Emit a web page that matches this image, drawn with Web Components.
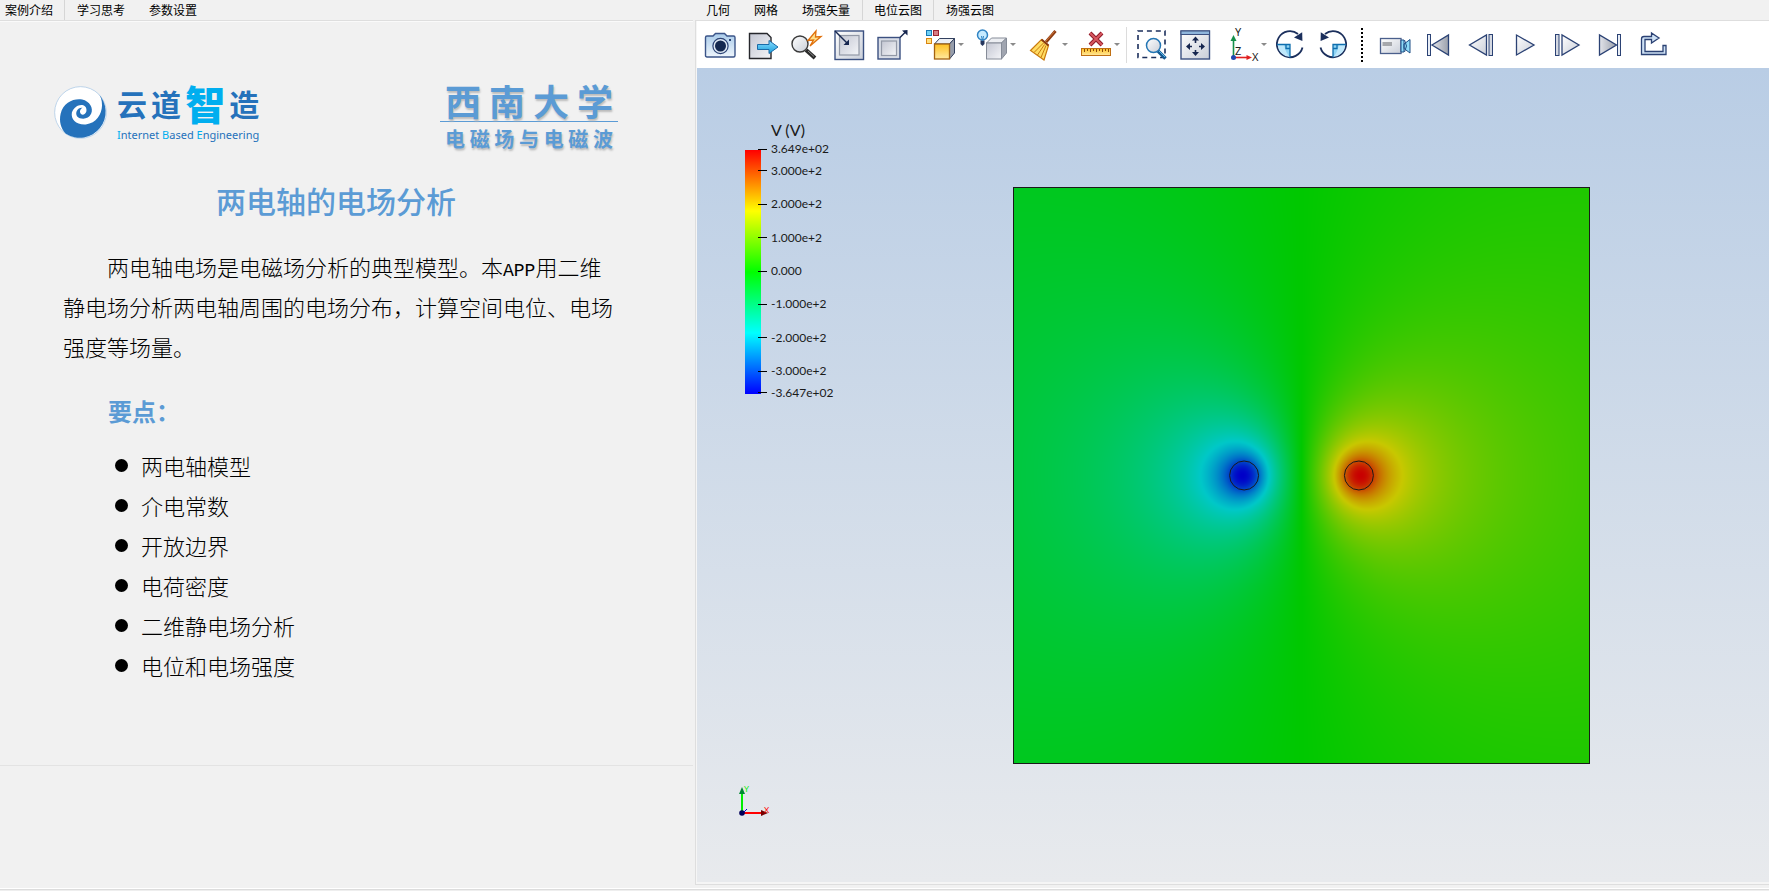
<!DOCTYPE html>
<html lang="zh-CN">
<head>
<meta charset="utf-8">
<title>两电轴的电场分析</title>
<style>
html,body{margin:0;height:100%}
body{background:#f1f1f1;color:#000;font-family:"Liberation Sans","Noto Sans CJK SC",sans-serif;font-size:12px}
</style>
</head>
<body>
<sim-app></sim-app>

<script>
const define = (name, html, setup) => {
  const tpl = document.createElement('template');
  tpl.innerHTML = html;
  customElements.define(name, class extends HTMLElement {
    connectedCallback() {
      if (this.shadowRoot) return;
      this.attachShadow({mode: 'open'}).appendChild(tpl.content.cloneNode(true));
      if (setup) setup(this, this.shadowRoot);
    }
  });
};

/* ---------- tabs ---------- */
define('tab-button', `
<style>
:host{display:block;height:20px}
button{all:unset;box-sizing:border-box;display:block;height:20px;padding:0 12px;font:12px/18px "Noto Sans CJK SC",sans-serif;white-space:nowrap}
:host([first]) button{padding-left:5px}
:host([selected]) button{padding:0 11px;border:solid #d6d6d6;border-width:0 1px}
:host([first][selected]) button{padding-left:5px;border-left:0}
</style>
<button type="button"><slot></slot></button>`);

/* ---------- toolbar icons, 32 x 32 ---------- */
const defs = `<defs>
<linearGradient id="g" x2="1" y2="1"><stop stop-color="#c3c6d2"/><stop offset="1" stop-color="#f4f5f8"/></linearGradient>
<linearGradient id="b" x2="0" y2="1"><stop stop-color="#a9cbea"/><stop offset="1" stop-color="#eef5fc"/></linearGradient>
<linearGradient id="c" x2="0" y2="1"><stop stop-color="#8adcff"/><stop offset="1" stop-color="#189fdc"/></linearGradient>
<linearGradient id="o" x2="0" y2="1"><stop stop-color="#ffc020"/><stop offset="1" stop-color="#ffe9a0"/></linearGradient>
<linearGradient id="w" x2="1" y2="1"><stop stop-color="#fff"/><stop offset="1" stop-color="#c9ced8"/></linearGradient>
<linearGradient id="d" x2="1" y2="0"><stop stop-color="#e2e4ea"/><stop offset="1" stop-color="#9ba0ab"/></linearGradient>
</defs>`;
const rotate = `<path d="M28.5 18.5A13 13 0 1 1 24 5" fill="none" stroke="#1b2f5c" stroke-width="1.8"/>
<path d="M20 8.5L28.2 3.2L28.4 12z" fill="#1b2f5c"/>
<path d="M3.5 15.5H16V28Q5 27 3.500 15.500z" fill="#bfe8fb"/><path d="M10 15.500H16V28q-4-3-6-12.500z" fill="#8fd4f4"/>
<path d="M3 15.500H16V28.500M12 15.500V19.500H16" fill="none" stroke="#0e6eae" stroke-width="1.3"/>`;
const icons = {
camera: `<path d="M3 7H9L11.500 4.500H20.500L23 7H29.500Q31 7 31 8.500V26.500Q31 28 29.500 28H3Q1.500 28 1.500 26.500V8.500Q1.500 7 3 7z" fill="url(#b)" stroke="#3b5488" stroke-width="1.4"/><circle cx="16.500" cy="17" r="7.600" fill="#dfe9f4" stroke="#2b4274" stroke-width="1.200"/><circle cx="16.500" cy="17" r="5.500" fill="#14284f"/><rect x="25" y="10" width="2" height="2" fill="#2b4274"/>`,
export: `<path d="M2.500 4.500H20L24 8.500V29.500H2.500z" fill="url(#g)" stroke="#26272c" stroke-width="1.400"/><path d="M10.500 15.500H22V11.500L31 18L22 24.500V20.500H10.500z" fill="url(#c)" stroke="#1a6ba8"/>`,
probe: `<path d="M16 21L25 29" stroke="#2b2b2b" stroke-width="4"/><path d="M18 22L24 27.500" stroke="#8a8a8a"/><circle cx="10" cy="15" r="8" fill="url(#w)" stroke="#3a3a3a" stroke-width="1.400"/><path d="M26 2L18 11.500L23.500 11L20 17L31 7.500L25.500 8z" fill="#ffe08a" stroke="#e0700c" stroke-width="1.300"/>`,
shrink: `<rect x="2" y="2" width="28.500" height="28.500" fill="url(#w)" stroke="#3b5080" stroke-width="1.400"/><rect x="6.500" y="6.500" width="19.500" height="19.500" fill="url(#g)" stroke="#9298a6" stroke-width="1.200"/><path d="M2 2L14 14" stroke="#16264f" stroke-width="1.400"/><path d="M16 16V10.500L10.500 16z" fill="#16264f"/>`,
expand: `<rect x="2" y="8.500" width="22" height="21.500" fill="#d9dde6" stroke="#3b5080" stroke-width="1.400"/><rect x="5.500" y="12" width="15" height="14.500" fill="url(#g)" stroke="#9298a6" stroke-width="1.200"/><path d="M24 8.500L30 2.500" stroke="#16264f" stroke-width="1.400"/><path d="M31.500 1V6.500L26 1.500z" fill="#16264f"/>`,
cube: `<rect x="2.500" y="1.500" width="5" height="5" fill="#6fd0f6" stroke="#1779b5"/><rect x="9.500" y="1.500" width="5" height="5" fill="#d67b83" stroke="#9c2433"/><rect x="2.500" y="9.500" width="5" height="5" fill="#ffe080" stroke="#d98411"/><path d="M10.500 15L15.500 9.500H30.500L25.500 15z" fill="#eceef2" stroke="#33415f"/><path d="M25.500 15L30.500 9.500V24L25.500 30z" fill="#969dab" stroke="#33415f"/><rect x="10.500" y="15" width="15" height="15" fill="url(#o)" stroke="#a36210" stroke-width="1.300"/>`,
bulb: `<circle cx="6.500" cy="6" r="5" fill="#c6ebff" stroke="#3184c4" stroke-width="1.500"/><path d="M4.500 11.500H8.500V15L6.500 17L4.500 15z" fill="#26375e"/><path d="M5.500 7L6.500 12L7.500 7" fill="none" stroke="#3184c4"/><path d="M10.500 14L15.500 9H30.500L25.500 14z" fill="#eceef2" stroke="#868c98"/><path d="M25.500 14L30.500 9V24L25.500 30z" fill="#a0a5b0" stroke="#868c98"/><rect x="10.500" y="14" width="15" height="16" fill="url(#g)" stroke="#868c98"/>`,
broom: `<path d="M27.500 2L18 13" stroke="#8c3b10" stroke-width="3"/><path d="M26.500 2.500L18 12" stroke="#d1763a"/><path d="M13.500 10.500L20.500 16.500L16 31L2.500 21.500z" fill="#ffdc62" stroke="#c97a0e" stroke-width="1.200"/><path d="M15.500 14L6 23.500M16.500 15.500L9.500 26M18 16.500L13 28.500" stroke="#c97a0e"/><path d="M13.500 10.500L20.500 16.500" stroke="#8c3b10" stroke-width="2"/>`,
clear: `<path d="M10 4L22 16M22 4L10 16" stroke="#8f1a28" stroke-width="4"/><path d="M10 4L22 16M22 4L10 16" stroke="#d85860" stroke-width="2"/><rect x="1.500" y="19.500" width="29" height="7" fill="url(#o)" stroke="#c07014"/><path d="M4.500 20V23M7.500 20V22M10.500 20V23M13.500 20V22M16.500 20V23M19.500 20V22M22.500 20V23M25.500 20V22M28.500 20V23" stroke="#8a4a0c"/>`,
select: `<rect x="2" y="2" width="27" height="26.500" fill="none" stroke="#1b2f5c" stroke-width="1.600" stroke-dasharray="5 3.900"/><path d="M22 22L29.500 29.500" stroke="#155a92" stroke-width="3.600"/><path d="M23 22L29 28" stroke="#5bb6ea"/><circle cx="17.500" cy="16.500" r="7" fill="url(#w)" stroke="#2476b4" stroke-width="1.500"/>`,
fit: `<rect x="2" y="2" width="28.500" height="28" fill="url(#w)" stroke="#3b5080" stroke-width="1.400"/><rect x="2" y="2" width="28.500" height="3.500" fill="#8fb6dc" stroke="#3b5080"/><path d="M16.500 10V14M16.500 21V25M9 17.500H13M20 17.500H24" stroke="#16264f" stroke-width="1.600"/><path d="M16.500 7.500l3.500 4h-7zM16.500 27l3.500-4h-7zM7 17.500l4-3.500v7zM26 17.500l-4-3.500v7z" fill="#16264f"/>`,
axes: `<path d="M6.500 28V10" stroke="#16904a" stroke-width="1.600"/><path d="M6.500 6L9.500 12H3.500z" fill="#16904a"/><path d="M7 28.500H20" stroke="#e02020" stroke-width="1.600"/><path d="M25 28.500L19.500 31V26z" fill="#e02020"/><circle cx="6.500" cy="28.500" r="2.500" fill="#2048b0"/><g font-family="Noto Sans" font-size="11" fill="#222"><text x="8" y="7">Y</text><text x="8" y="26">Z</text><text x="25" y="32">X</text></g>`,
cw: rotate,
ccw: `<g transform="matrix(-1 0 0 1 32 0)">${rotate}</g>`,
video: `<rect x="1.500" y="9.500" width="20.500" height="15" fill="url(#w)" stroke="#4a5f8c" stroke-width="1.300"/><rect x="3.500" y="13" width="9.500" height="4" fill="#a6a8ac"/><path d="M22 11H25V23H22zM25 15L31 10.500V24L25 19.500z" fill="#8fdcf8" stroke="#1f4f86"/><path d="M25.500 11L27.500 17L25.500 23" fill="none" stroke="#1f4f86"/>`,
first: `<path d="M26.500 6V26L10 16z" fill="url(#d)" stroke="#2b4274" stroke-width="1.300"/><rect x="5.500" y="5.500" width="3" height="21" fill="#e8edf5" stroke="#2b4274"/>`,
prev: `<path d="M21.500 6V26L4.500 16z" fill="url(#w)" stroke="#2b4274" stroke-width="1.300"/><rect x="24" y="5.500" width="3.500" height="21" fill="#d5d9e2" stroke="#2b4274"/>`,
play: `<path d="M8.500 6V26L26 16z" fill="url(#w)" stroke="#2b4274" stroke-width="1.300"/>`,
next: `<path d="M11 6V26L28 16z" fill="url(#w)" stroke="#2b4274" stroke-width="1.300"/><rect x="4.500" y="5.500" width="3.500" height="21" fill="#d5d9e2" stroke="#2b4274"/>`,
last: `<path d="M5.500 6V26L22.500 16z" fill="url(#d)" stroke="#2b4274" stroke-width="1.300"/><rect x="23.500" y="5.500" width="3" height="21" fill="#e8edf5" stroke="#2b4274"/>`,
loop: `<path d="M4.500 25.500V10Q4.500 7.500 7 7.500H14.500V4L22 9L14.500 14V10.500H8V22.500H26V16.500H29V25.500z" fill="#cfe2f5" stroke="#2b4274" stroke-width="1.300"/>`
};
define('tool-button', `
<style>
:host{display:block;flex:none}
:host([menu]){margin-left:5px}
button{all:unset;box-sizing:border-box;width:43px;height:47px;padding:0 5px 0 6px;display:flex;align-items:center}
:host([menu]) button{width:47px;padding-right:0}
svg{display:block;flex:none;width:32px;height:32px;overflow:visible}
i{display:none;border:3px solid transparent;border-top-color:#8a8a8a;border-bottom:0;margin-left:2px}
:host([menu]) i{display:block}
</style>
<button type="button"><svg viewBox="0 0 32 32" aria-hidden="true"></svg><i></i></button>`,
(el, root) => {
  root.querySelector('svg').innerHTML = defs + icons[el.getAttribute('icon')];
  root.querySelector('button').setAttribute('aria-label', el.getAttribute('icon'));
});

define('tool-bar', `
<style>
:host{display:flex;align-items:center;height:47px;padding-left:1px;background:#fff;overflow:hidden}
.line{flex:none;width:1px;height:36px;margin:0 3px 0 5px;background:#dcdcdc}
.dots{flex:none;width:2px;height:34px;margin:0 10px 0 7px;background:repeating-linear-gradient(#000 0 2px,#fff 2px 4px)}
</style>
<tool-button icon="camera"></tool-button><tool-button icon="export"></tool-button><tool-button icon="probe"></tool-button><tool-button icon="shrink"></tool-button><tool-button icon="expand"></tool-button>
<tool-button icon="cube" menu></tool-button><tool-button icon="bulb" menu></tool-button><tool-button icon="broom" menu></tool-button><tool-button icon="clear" menu></tool-button>
<span class="line"></span>
<tool-button icon="select"></tool-button><tool-button icon="fit"></tool-button><tool-button icon="axes" menu></tool-button><tool-button icon="cw"></tool-button><tool-button icon="ccw"></tool-button>
<span class="dots"></span>
<tool-button icon="video"></tool-button><tool-button icon="first"></tool-button><tool-button icon="prev"></tool-button><tool-button icon="play"></tool-button><tool-button icon="next"></tool-button><tool-button icon="last"></tool-button><tool-button icon="loop"></tool-button>`);

/* ---------- colour legend: rows are spaced in proportion to their values ---------- */
define('color-legend', `
<style>
:host{display:block;font-family:Lato,sans-serif;color:#1a1a1a}
h2{margin:0 0 10px 26px;font-size:16px;line-height:20px;font-weight:400}
.scale{display:flex;height:244px}
.bar{width:16px;background:linear-gradient(#f00,#ff0 25%,#0f0 50%,#0ff 75%,#00f)}
ul{list-style:none;margin:0 0 0 -3px;padding:0;display:flex;flex-direction:column;font-size:12px}
li{min-height:0;height:0}
span{display:flex;align-items:center;gap:4px;height:14px;margin-top:-8px;line-height:14px;white-space:nowrap}
span::before{content:"";width:9px;height:1px;background:#000}
</style>
<h2>V (V)</h2>
<div class="scale"><div class="bar"></div><ul></ul></div>`,
(el, root) => {
  const ticks = [[364.9,'3.649e+02'],[300,'3.000e+2'],[200,'2.000e+2'],[100,'1.000e+2'],[0,'0.000'],
    [-100,'-1.000e+2'],[-200,'-2.000e+2'],[-300,'-3.000e+2'],[-364.7,'-3.647e+02']];
  const ul = root.querySelector('ul');
  ticks.forEach(([v, label], i) => {
    const li = document.createElement('li');
    li.innerHTML = '<span>' + label + '</span>';
    li.style.flex = i < ticks.length - 1 ? (v - ticks[i + 1][0]) + ' 0 0' : '0 0 0';
    ul.appendChild(li);
  });
});

/* ---------- potential of two uniformly charged cylinders ---------- */
define('field-plot', `
<style>
:host{display:block;position:relative;box-sizing:border-box;height:100%;aspect-ratio:1;border:1px solid #1a1a1a}
canvas,svg{display:block;width:100%;height:100%}
svg{position:absolute;inset:0}
</style>
<canvas width="576" height="576"></canvas>
<svg viewBox="0 0 576 576" fill="none" stroke="#1a1a1a"><circle cx="230.500" cy="288" r="14.500"/><circle cx="345.500" cy="288" r="14.500"/></svg>`,
(el, root) => {
  const N = 576, R = 14.5, D = 57.5, K = 141.5;
  const ctx = root.querySelector('canvas').getContext('2d');
  const img = ctx.createImageData(N, N);
  const phi = r2 => r2 > R * R ? -Math.log(r2) / 2 : -Math.log(R) + (1 - r2 / (R * R)) / 2;
  const clamp = t => Math.max(0, Math.min(1, t));
  for (let j = 0, p = 0; j < N; j++) for (let i = 0; i < N; i++, p += 4) {
    const x = i + .5 - N / 2, y = j + .5 - N / 2;
    const v = K * (phi((x - D) ** 2 + y * y) - phi((x + D) ** 2 + y * y));
    const s = 4 * v / 729.6;
    img.data[p] = 200 * clamp(s);
    img.data[p + 1] = 200 * clamp(2 - Math.abs(s));
    img.data[p + 2] = 200 * clamp(-s);
    img.data[p + 3] = 255;
  }
  ctx.putImageData(img, 0, 0);
});

define('axis-triad', `
<style>:host{display:block}svg{display:block}</style>
<svg width="36" height="36" viewBox="0 0 36 36"><path d="M5 30V10" stroke="#0e0" stroke-width="2"/><path d="M5 4L8 11H2z" fill="#083"/><path d="M5 30H25" stroke="#f00" stroke-width="2"/><path d="M31 30L24 27V33z" fill="#700"/><circle cx="5" cy="30" r="2.800" fill="#00005a"/><path d="M7 29l3-3" stroke="#00c"/><text x="7" y="9" font-family="Lato" font-size="8" fill="#0e0">Y</text><text x="27" y="30" font-family="Lato" font-size="8" fill="#f00">X</text></svg>`);

define('scene-view', `
<style>
:host{display:grid;grid-template-columns:137px minmax(0,1fr);background:linear-gradient(#b9cde5,#e8eaed);overflow:hidden}
.side{display:flex;flex-direction:column;justify-content:space-between}
color-legend{margin:52px 0 0 48px}
axis-triad{margin:0 0 63px 40px}
.stage{display:flex;justify-content:center;box-sizing:border-box;height:100%;min-height:0;padding:119px 0 118px}
</style>
<div class="side"><color-legend></color-legend><axis-triad></axis-triad></div>
<div class="stage"><field-plot></field-plot></div>`);

define('result-pane', `
<style>
:host{display:flex;flex-direction:column;min-width:0;min-height:0}
nav{display:flex;height:20px}
.frame{flex:1;min-height:0;display:flex;flex-direction:column;margin:0 0 3px 1px;padding-bottom:2px;padding-left:1px;border:1px solid #dedede;border-right:0;background:#f5f5f5}
scene-view{flex:1;min-height:0}
</style>
<nav><tab-button>几何</tab-button><tab-button>网格</tab-button><tab-button>场强矢量</tab-button><tab-button selected>电位云图</tab-button><tab-button>场强云图</tab-button></nav>
<div class="frame"><tool-bar></tool-bar><scene-view></scene-view></div>`);

/* ---------- introduction ---------- */
define('company-logo', `
<style>
:host{display:flex;align-items:flex-end;color:#2572bb;font-family:"Noto Sans CJK SC",sans-serif}
svg{width:53px;height:55px;margin:0 10px 3px 0;overflow:visible}
.name{display:flex;justify-content:space-between;align-items:center;height:48px;font-size:30px;line-height:48px;font-weight:700}
.name b{font-size:40px;color:#00aeef}
.en{font:11px/16px "Noto Sans",sans-serif;white-space:nowrap}
.en b{font-weight:400;color:#00aeef}
</style>
<svg viewBox="160 264 160 164" aria-hidden="true"><circle cx="240" cy="346" r="78" fill="#fff" stroke="#9fc3e4" stroke-width="2"/><path d="M293 289A78 78 0 0 1 196 410C180 395 175 372 180 350C188 315 220 303 245 307C268 312 280 334 272 350C264 368 240 368 230 358C222 346 232 330 246 332C236 338 236 350 246 353C258 353 262 336 254 328C242 318 222 326 214 346C210 368 228 384 256 382C288 378 304 352 305 325C305 308 301 297 293 289z" fill="#2572bb"/></svg>
<div><div class="name"><span>云</span><span>道</span><b>智</b><span>造</span></div><div class="en"><b>I</b>nternet <b>B</b>ased <b>E</b>ngineering</div></div>`);

define('school-logo', `
<style>
:host{display:block;width:178px;box-sizing:border-box;color:#5b9bd5;font-family:"Noto Sans CJK SC",sans-serif;font-weight:700;text-shadow:1px 2px 2px #bbb}
div{padding:0 5px;text-align:justify;text-align-last:justify}
.top{font-size:36px;line-height:42px;border-bottom:1px solid #5b9bd5}
.sub{font-size:20px;line-height:34px}
</style>
<div class="top">西南大学</div><div class="sub">电磁场与电磁波</div>`);

define('case-article', `
<style>
:host{display:block;font-family:"Noto Sans CJK SC",sans-serif;font-size:22px;line-height:40px;font-weight:300}
article{padding:57px 75px 0 54px}
header{display:flex;justify-content:space-between;align-items:flex-start;height:70px}
h1,h2{margin:0;color:#5b9bd5;font-weight:500;line-height:40px}
h1{margin-top:31px;font-size:30px;text-align:center}
p{margin:26px 0 0;padding-left:9px;text-indent:2em}
p span{font:400 18px/20px "Liberation Mono",monospace}
h2{margin:25px 0 0 54px;font-size:24px;font-weight:700}
ul{list-style:none;margin:14px 0 0 61px;padding:0}
li{display:flex;align-items:center;gap:13px}
li::before{content:"";width:13px;height:13px;border-radius:50%;background:#000}
</style>
<article>
<header><company-logo></company-logo><school-logo></school-logo></header>
<h1>两电轴的电场分析</h1>
<p>两电轴电场是电磁场分析的典型模型。本<span>APP</span>用二维静电场分析两电轴周围的电场分布，计算空间电位、电场强度等场量。</p>
<h2>要点：</h2>
<ul><li>两电轴模型</li><li>介电常数</li><li>开放边界</li><li>电荷密度</li><li>二维静电场分析</li><li>电位和电场强度</li></ul>
</article>`);

define('intro-pane', `
<style>
:host{display:flex;flex-direction:column;min-width:0;min-height:0;padding-right:1px}
nav{display:flex;height:20px;border-bottom:1px solid #dedede}
case-article{flex:744 0 0;min-height:0;overflow:hidden;border-top:1px solid #fafafa}
footer{flex:122 0 0;border-top:1px solid #e3e3e3}
</style>
<nav><tab-button first selected>案例介绍</tab-button><tab-button>学习思考</tab-button><tab-button>参数设置</tab-button></nav>
<case-article></case-article><footer></footer>`);

define('sim-app', `
<style>
:host{display:grid;grid-template:minmax(0,1fr) 1px / minmax(0,694fr) minmax(0,1075fr);box-sizing:border-box;height:100vh;overflow:hidden}
.status{grid-column:1/-1;background:#eee;box-shadow:0 -1px #dcdcdc,0 -2px #fff}
intro-pane,result-pane{margin-bottom:2px}
</style>
<intro-pane></intro-pane><result-pane></result-pane><div class="status"></div>`);
</script>
</body>
</html>
